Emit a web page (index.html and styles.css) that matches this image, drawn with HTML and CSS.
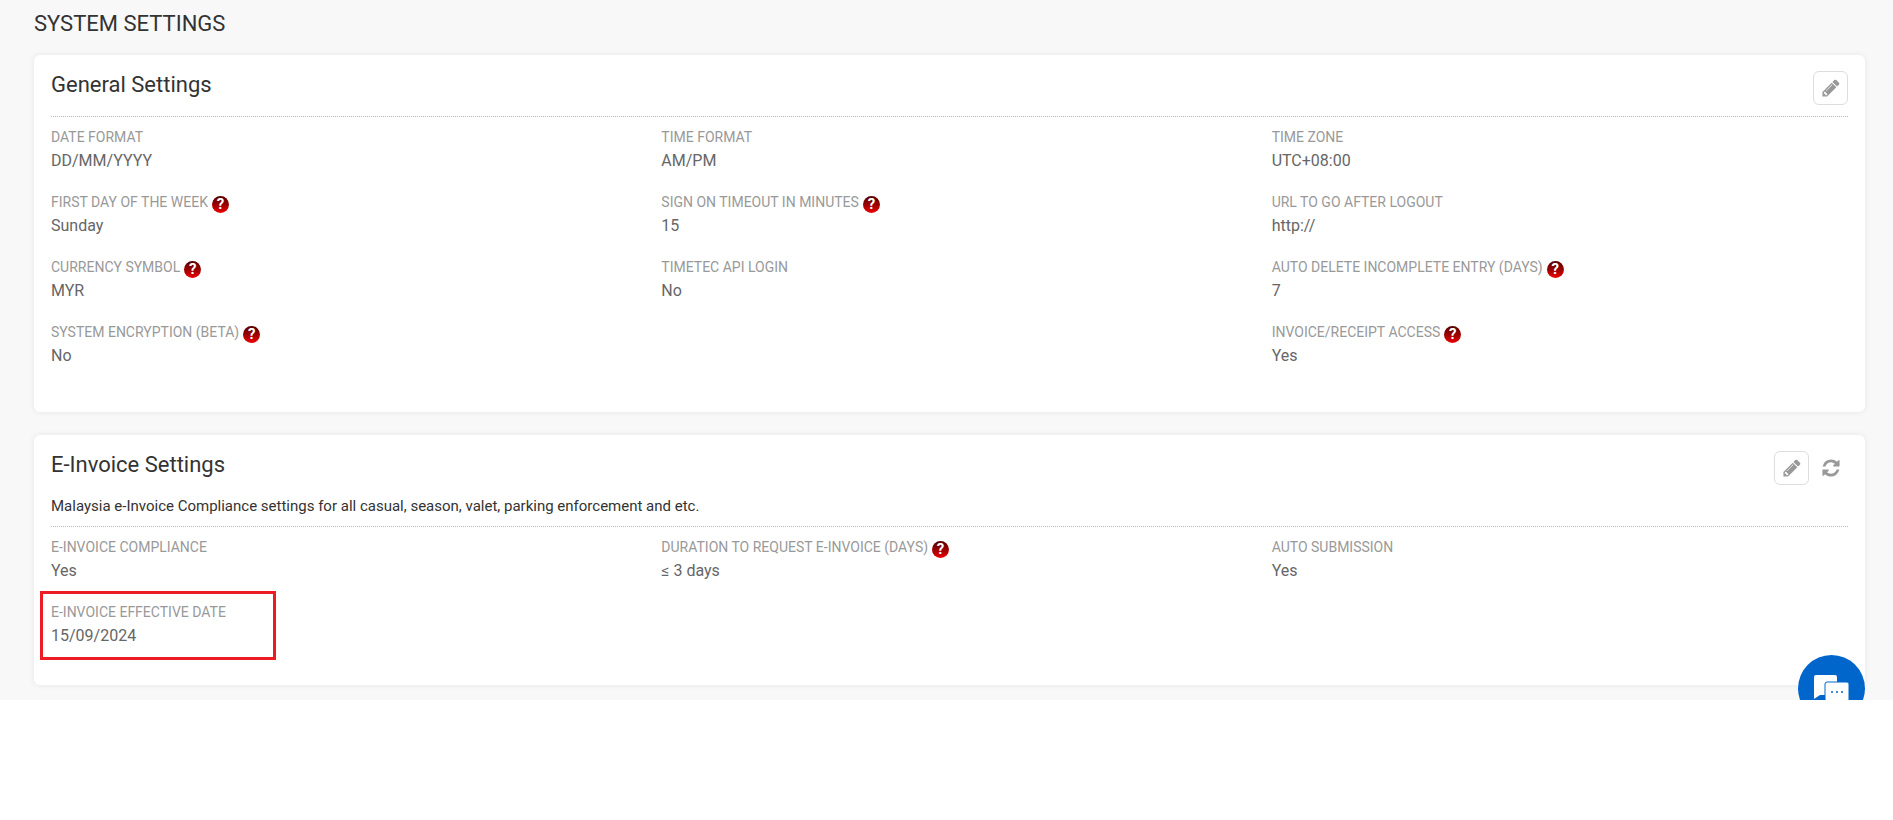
FILE: index.html
```html
<!DOCTYPE html>
<html lang="en">
<head>
    <meta charset="UTF-8">
    <meta name="viewport" content="width=device-width, initial-scale=1.0">
    <title>System Settings</title>
    <link rel="stylesheet" href="styles.css">
</head>
<body>
    <svg class="sprite" aria-hidden="true">
        <symbol id="icon-pencil" viewBox="0 0 1792 1792">
            <path d="M491 1536l91-91-235-235-91 91v107h128v128h107zm523-928q0-22-22-22-10 0-17 7l-542 542q-7 7-7 17 0 22 22 22 10 0 17-7l542-542q7-7 7-17zm-54-192l416 416-832 832h-416v-416zm683 96q0 53-37 90l-166 166-416-416 166-165q36-38 90-38 53 0 91 38l235 234q37 39 37 91z"/>
        </symbol>
        <symbol id="icon-refresh" viewBox="0 0 1792 1792">
            <path d="M1639 1056q0 5-1 7-64 268-268 434.5t-478 166.5q-146 0-282.5-55t-243.5-157l-129 129q-19 19-45 19t-45-19-19-45v-448q0-26 19-45t45-19h448q26 0 45 19t19 45-19 45l-137 137q71 66 161 102t187 36q134 0 250-65t186-179q11-17 53-117 8-23 30-23h192q13 0 22.5 9.5t9.5 22.5zm25-800v448q0 26-19 45t-45 19h-448q-26 0-45-19t-19-45 19-45l138-138q-148-137-349-137-134 0-250 65t-186 179q-11 17-53 117-8 23-30 23h-199q-13 0-22.5-9.5t-9.5-22.5v-7q65-268 270-434.5t480-166.5q146 0 284 55.5t245 156.5l130-129q19-19 45-19t45 19 19 45z"/>
        </symbol>
    </svg>

    <main class="page">
        <h1>SYSTEM SETTINGS</h1>

        <section class="card">
            <div class="card-header">
                <h2>General Settings</h2>
                <div class="actions">
                    <button class="btn" aria-label="Edit"><svg><use href="#icon-pencil"/></svg></button>
                </div>
            </div>
            <dl class="settings">
                <div class="item"><dt>DATE FORMAT</dt><dd>DD/MM/YYYY</dd></div>
                <div class="item"><dt>TIME FORMAT</dt><dd>AM/PM</dd></div>
                <div class="item"><dt>TIME ZONE</dt><dd>UTC+08:00</dd></div>

                <div class="item"><dt>FIRST DAY OF THE WEEK <span class="help">?</span></dt><dd>Sunday</dd></div>
                <div class="item"><dt>SIGN ON TIMEOUT IN MINUTES <span class="help">?</span></dt><dd>15</dd></div>
                <div class="item"><dt>URL TO GO AFTER LOGOUT</dt><dd>http://</dd></div>

                <div class="item"><dt>CURRENCY SYMBOL <span class="help">?</span></dt><dd>MYR</dd></div>
                <div class="item"><dt>TIMETEC API LOGIN</dt><dd>No</dd></div>
                <div class="item"><dt>AUTO DELETE INCOMPLETE ENTRY (DAYS) <span class="help">?</span></dt><dd>7</dd></div>

                <div class="item"><dt>SYSTEM ENCRYPTION (BETA) <span class="help">?</span></dt><dd>No</dd></div>
                <div class="item last-col"><dt>INVOICE/RECEIPT ACCESS <span class="help">?</span></dt><dd>Yes</dd></div>
            </dl>
        </section>

        <section class="card">
            <div class="card-header">
                <h2>E-Invoice Settings</h2>
                <div class="actions">
                    <button class="btn" aria-label="Edit"><svg><use href="#icon-pencil"/></svg></button>
                    <button class="btn btn-plain" aria-label="Refresh"><svg><use href="#icon-refresh"/></svg></button>
                </div>
                <p>Malaysia e-Invoice Compliance settings for all casual, season, valet, parking enforcement and etc.</p>
            </div>
            <dl class="settings settings-short">
                <div class="item"><dt>E-INVOICE COMPLIANCE</dt><dd>Yes</dd></div>
                <div class="item"><dt>DURATION TO REQUEST E-INVOICE (DAYS) <span class="help">?</span></dt><dd>≤ 3 days</dd></div>
                <div class="item"><dt>AUTO SUBMISSION</dt><dd>Yes</dd></div>

                <div class="item highlight"><dt>E-INVOICE EFFECTIVE DATE</dt><dd>15/09/2024</dd></div>
            </dl>
        </section>

        <button class="chat" aria-label="Chat">
            <svg viewBox="0 0 67 67">
                <path fill="#fff" d="M18 20h19q2 0 2 2v18H22l-6 4V22q0-2 2-2z"/>
                <path fill="#fff" stroke="#0066cc" d="M29 27h20q2 0 2 2v22l-6-5H29q-2 0-2-2V29q0-2 2-2z"/>
                <g fill="#0066cc">
                    <circle cx="34" cy="37" r="1"/>
                    <circle cx="39" cy="37" r="1"/>
                    <circle cx="44" cy="37" r="1"/>
                </g>
            </svg>
        </button>
    </main>
</body>
</html>
```

FILE: styles.css
```css
* {
    box-sizing: border-box;
}
body {
    font-family: Roboto, "Liberation Sans", sans-serif;
    font-size: 16px;
    line-height: 23px;
    color: #333;
    background-color: #fff;
    margin: 0;
}
h1, h2, p, dl, dd {
    margin: 0;
    font-weight: normal;
}
.sprite {
    display: none;
}
.page {
    position: relative;
    overflow: hidden;
    padding: 8px 28px 15px 34px;
    background-color: #f8f8f8;
}
h1 {
    font-size: 22px;
    line-height: 32px;
    margin-bottom: 15px;
}
.card {
    background-color: #fff;
    border-radius: 6px;
    box-shadow: 0 0 6px rgba(0, 0, 0, 0.08);
}
.card + .card {
    margin-top: 23px;
}
.card-header {
    display: flex;
    flex-wrap: wrap;
    justify-content: space-between;
    margin: 0 17px;
    padding: 16px 0 11px;
    border-bottom: 1px dotted #bbb;
}
h2 {
    font-size: 22px;
    line-height: 28px;
}
.card-header p {
    width: 100%;
    margin: 10px 0 -3px;
    font-size: 15px;
}
.actions {
    display: flex;
    gap: 4px;
}
.btn {
    display: flex;
    align-items: center;
    justify-content: center;
    width: 35px;
    height: 34px;
    padding: 0;
    background-color: #fff;
    border: 1px solid #ddd;
    border-radius: 6px;
    cursor: pointer;
}
.btn svg {
    width: 20px;
    height: 20px;
    fill: #999;
}
.btn-plain {
    border-color: transparent;
}
.settings {
    display: grid;
    grid-template-columns: repeat(3, 1fr);
    row-gap: 19px;
    padding: 9px 0 45px;
}
.settings-short {
    padding-bottom: 38px;
}
.item {
    position: relative;
    padding-left: 17px;
}
.last-col {
    grid-column: 3;
}
dt {
    display: flex;
    align-items: center;
    gap: 4px;
    font-size: 14px;
    color: #999;
}
dd {
    color: #666;
}
.help {
    width: 17px;
    height: 17px;
    margin-top: 3px;
    border-radius: 50%;
    background-image: linear-gradient(#500, #900 50%, #e00);
    color: #fff;
    font: bold 15px/17px Roboto, sans-serif;
    text-align: center;
    cursor: help;
}
.highlight::before {
    content: "";
    box-sizing: border-box;
    position: absolute;
    top: -10px;
    left: 6px;
    width: 236px;
    height: 69px;
    border: 3px solid #ed1c24;
}
.chat {
    position: absolute;
    right: 28px;
    bottom: -22px;
    width: 67px;
    height: 67px;
    padding: 0;
    border: none;
    border-radius: 50%;
    background-color: #0066cc;
    cursor: pointer;
}
.chat svg {
    display: block;
}
```
